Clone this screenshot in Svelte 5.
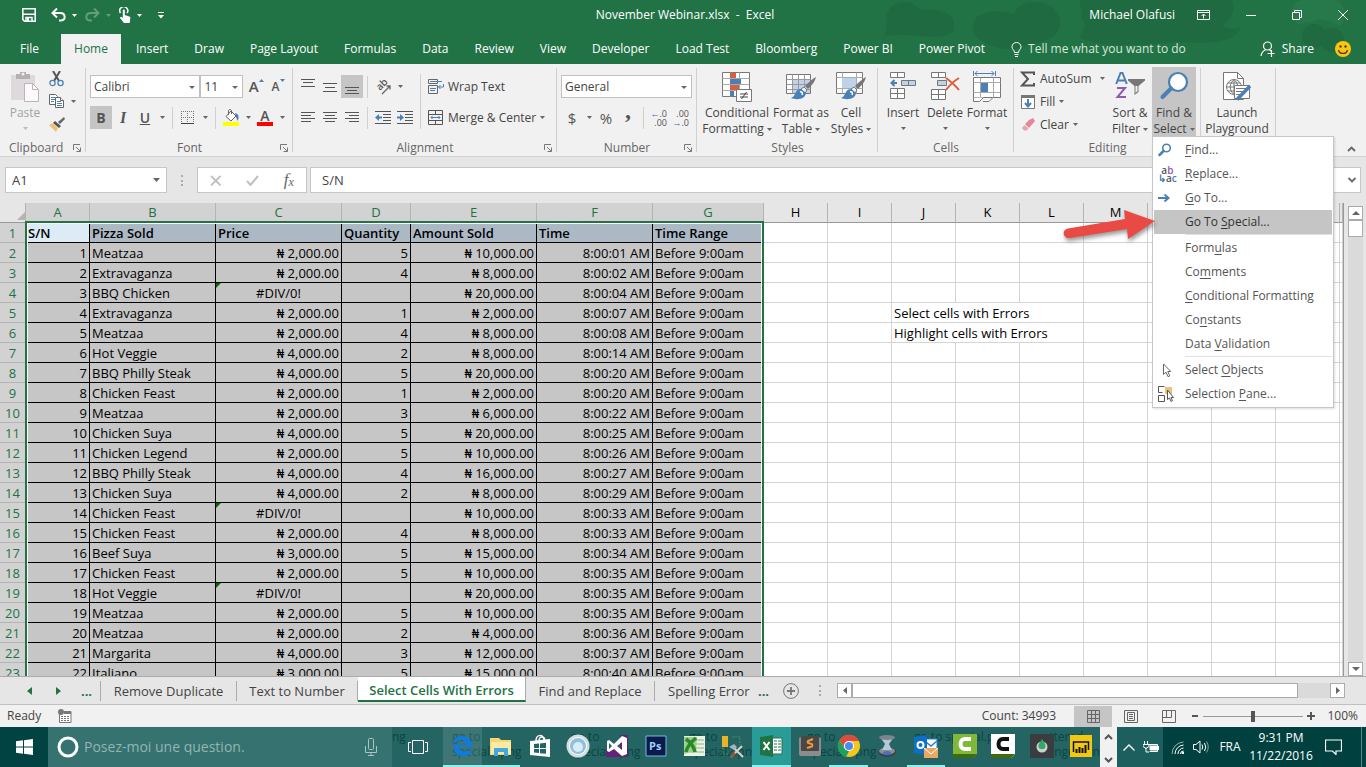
<script lang="ts">
  type Row = [string, string, string, string, string];

  const menuTabs = [
    'Insert', 'Draw', 'Page Layout', 'Formulas', 'Data', 'Review', 'View',
    'Developer', 'Load Test', 'Bloomberg', 'Power BI', 'Power Pivot',
  ];

  // widths in px; the first seven hold the selected list
  const columns = [
    { name: 'A', width: 64 }, { name: 'B', width: 126 }, { name: 'C', width: 126 },
    { name: 'D', width: 69 }, { name: 'E', width: 126 }, { name: 'F', width: 116 },
    { name: 'G', width: 111 },
    ...'HIJKLMNOP'.split('').map((name) => ({ name, width: 64 })),
  ];
  const selectedCount = 7;
  const selectionWidth = columns.slice(0, selectedCount).reduce((sum, c) => sum + c.width, 0);

  const headings = ['S/N', 'Pizza Sold', 'Price', 'Quantity', 'Amount Sold', 'Time', 'Time Range'];

  const ERR = '#DIV/0!';
  // pizza, price, quantity, amount, time
  const rows: Row[] = [
    ['Meatzaa', '2,000.00', '5', '10,000.00', '8:00:01 AM'],
    ['Extravaganza', '2,000.00', '4', '8,000.00', '8:00:02 AM'],
    ['BBQ Chicken', ERR, '', '20,000.00', '8:00:04 AM'],
    ['Extravaganza', '2,000.00', '1', '2,000.00', '8:00:07 AM'],
    ['Meatzaa', '2,000.00', '4', '8,000.00', '8:00:08 AM'],
    ['Hot Veggie', '4,000.00', '2', '8,000.00', '8:00:14 AM'],
    ['BBQ Philly Steak', '4,000.00', '5', '20,000.00', '8:00:20 AM'],
    ['Chicken Feast', '2,000.00', '1', '2,000.00', '8:00:20 AM'],
    ['Meatzaa', '2,000.00', '3', '6,000.00', '8:00:22 AM'],
    ['Chicken Suya', '4,000.00', '5', '20,000.00', '8:00:25 AM'],
    ['Chicken Legend', '2,000.00', '5', '10,000.00', '8:00:26 AM'],
    ['BBQ Philly Steak', '4,000.00', '4', '16,000.00', '8:00:27 AM'],
    ['Chicken Suya', '4,000.00', '2', '8,000.00', '8:00:29 AM'],
    ['Chicken Feast', ERR, '', '10,000.00', '8:00:33 AM'],
    ['Chicken Feast', '2,000.00', '4', '8,000.00', '8:00:33 AM'],
    ['Beef Suya', '3,000.00', '5', '15,000.00', '8:00:34 AM'],
    ['Chicken Feast', '2,000.00', '5', '10,000.00', '8:00:35 AM'],
    ['Hot Veggie', ERR, '', '20,000.00', '8:00:35 AM'],
    ['Meatzaa', '2,000.00', '5', '10,000.00', '8:00:35 AM'],
    ['Meatzaa', '2,000.00', '2', '4,000.00', '8:00:36 AM'],
    ['Margarita', '4,000.00', '3', '12,000.00', '8:00:37 AM'],
    ['Italiano', '3,000.00', '5', '15,000.00', '8:00:40 AM'],
  ];

  // notes typed in column J, by sheet row
  const notes: Record<number, string> = {
    5: 'Select cells with Errors',
    6: 'Highlight cells with Errors',
  };

  // [before, access key, after]
  const findMenu = [
    { icon: 'find', label: ['', 'F', 'ind...'] },
    { icon: 'replace', label: ['', 'R', 'eplace...'] },
    { icon: 'goto', label: ['', 'G', 'o To...'] },
    { icon: '', label: ['Go To ', 'S', 'pecial...'], active: true, ruled: true },
    { icon: '', label: ['Form', 'u', 'las'] },
    { icon: '', label: ['Co', 'm', 'ments'] },
    { icon: '', label: ['', 'C', 'onditional Formatting'] },
    { icon: '', label: ['Co', 'n', 'stants'] },
    { icon: '', label: ['Data ', 'V', 'alidation'], ruled: true },
    { icon: 'pointer', label: ['Select ', 'O', 'bjects'] },
    { icon: 'pane', label: ['Selection ', 'P', 'ane...'] },
  ];

  const apps = [
    'edge', 'explorer', 'store', 'disc', 'vs', 'ps', 'xl07', 'tools', 'excel',
    'sublime', 'chrome', 'lens', 'outlook', 'cam', 'camrec', 'drop', 'powerbi',
  ];
  const running = ['edge', 'explorer', 'excel', 'chrome', 'outlook'];

  // desktop file names that show through the taskbar
  const ghosts = [
    { x: 392, a: 'ng', b: '' },
    { x: 452, a: 'go to', b: 'special4.png' },
    { x: 571, a: 'go to', b: 'special3.png' },
    { x: 689, a: 'go to', b: 'special2.png' },
    { x: 807, a: 'go to', b: 'special1.png' },
    { x: 914, a: 'go to special.png', b: '' },
    { x: 1031, a: 'scattered', b: 'arrangement.png' },
  ];

  let zoom = $state(50);
</script>

{#snippet caret()}
  <svg class="caret" width="5" height="3" viewBox="0 0 5 3"><path d="M0 0h5L2.5 3z" /></svg>
{/snippet}

{#snippet launcher()}
  <button class="launcher" aria-label="More options">
    <svg width="8" height="8" viewBox="0 0 8 8" fill="none" stroke="#777">
      <path d="M.5 6V.5H7M3 3l4 4M7.5 3.5v4h-4" />
    </svg>
  </button>
{/snippet}

{#snippet lines(rowsOf: number[][])}
  <svg width="16" height="16" viewBox="0 0 16 16" stroke="#555">
    {#each rowsOf as [x1, x2, y]}
      <path d="M{x1} {y}.5H{x2}" />
    {/each}
  </svg>
{/snippet}

{#snippet brush()}
  <path d="M30 7c-4 2-8 6-11 9l3 3c3-3 7-7 8-12z" fill="#777" />
  <path d="M18 17l3 3-2 3-4-4z" fill="#f1f1f1" stroke="#777" />
  <path d="M15 19c-4 0-5 3-6 5-1 2-2 3-4 4 5 2 14 2 15-5z" fill="#4a80b5" />
  <path d="M14 22c2-1 3 1 2 3" fill="none" stroke="#fff" stroke-width="1.5" />
{/snippet}

<div class="window">
  <header class="title">
    <svg class="doodle" width="520" height="64" viewBox="0 0 520 64" aria-hidden="true">
      <g fill="#1f6a40">
        <path d="M40 16C44 0 66-2 74 10c14-2 34 2 34 12 0 6 2 10-6 12-12 8-44-4-64 3 2-8 4-10 2-21z" />
        <path d="M130 18c10-8 24-8 38-4 4-16 42-18 46 6 2 22-24 22-42 28-14 4-26-2-34-6-12-6-14-16-8-24z" />
        <path d="M234 0h152c4 12 0 18-10 26 8 4 14 2 18 2-4 14-28 16-60 14-40 2-70 8-100-4 2-10 10-12 2-18z" />
        <circle cx="468" cy="36" r="12" /><circle cx="486" cy="40" r="12" />
      </g>
      <path d="M452 24c-12-12-4-24 4-24h34c10 4 12 20 4 26-6-4-20-10-28-4z" fill="#27794b" />
    </svg>
    <div class="caption">
      <div class="quick">
        <button class="save" aria-label="Save">
          <svg width="14" height="14" viewBox="0 0 14 14"><path d="M.8.8h12.4v12.4H2.5L.8 11.5z" fill="none" stroke="#fff" stroke-width="1.6" /><path d="M1 6.2h12M4 13V9.5h6V13" fill="none" stroke="#fff" stroke-width="1.5" /><path d="M5 10h2v3H5z" fill="#fff" /></svg>
        </button>
        <button aria-label="Undo">
          <svg width="15" height="14" viewBox="0 0 15 14"><path d="M2 5h7c6 0 6 7 1 7.5H8" fill="none" stroke="#fff" stroke-width="2" /><path d="M6 .5L1.5 5 6 9.5" fill="none" stroke="#fff" stroke-width="2" /></svg>
          <span class="white">{@render caret()}</span>
        </button>
        <button class="off" aria-label="Redo">
          <svg width="15" height="14" viewBox="0 0 15 14"><path d="M13 5H6c-6 0-6 7-1 7.5h2" fill="none" stroke="#fff" stroke-width="2" /><path d="M9 .5L13.5 5 9 9.5" fill="none" stroke="#fff" stroke-width="2" /></svg>
          <span class="white">{@render caret()}</span>
        </button>
        <button aria-label="Touch mode">
          <svg width="12" height="16" viewBox="0 0 12 16"><path d="M1.5 6a4 4 0 1 1 6.5 0" fill="none" stroke="#fff" stroke-width="1.5" /><path d="M3.8 3.5c0-1.5 2-1.5 2 0V8l4.5 1.5c1 .5 1.2 1 1 2l-.6 4.5H5L1 11c0-1 1.5-1.5 2.8-.3z" fill="#fff" /></svg>
          <span class="white">{@render caret()}</span>
        </button>
        <button class="custom" aria-label="Customize">
          <svg width="6" height="7" viewBox="0 0 6 7"><path d="M0 .5h6" stroke="#fff" /><path d="M0 3h6L3 6.5z" fill="#fff" /></svg>
        </button>
      </div>
      <div class="doc">November Webinar.xlsx&nbsp; -&nbsp; Excel</div>
      <div class="winctl">
        <span class="user">Michael Olafusi</span>
        <button aria-label="Ribbon display">
          <svg width="13" height="10" viewBox="0 0 13 10" fill="none" stroke="#fff"><path d="M.5.5h12v9H.5zM.5 2.5h12M6.5 8.5v-4M4.5 6l2-2 2 2" /></svg>
        </button>
        <button aria-label="Minimize"><svg width="10" height="10" viewBox="0 0 10 10" stroke="#fff"><path d="M0 5.5h10" /></svg></button>
        <button aria-label="Restore"><svg width="10" height="10" viewBox="0 0 10 10" fill="none" stroke="#fff"><path d="M.5 2.5h7v7h-7zM2.5 2.5v-2h7v7h-2" /></svg></button>
        <button aria-label="Close"><svg width="10" height="10" viewBox="0 0 10 10" stroke="#fff"><path d="M0 0l10 10M10 0L0 10" /></svg></button>
      </div>
    </div>
    <nav class="tabs">
      <button class="file">File</button>
      <button class="current">Home</button>
      {#each menuTabs as tab}
        <button>{tab}</button>
      {/each}
      <button class="tell">
        <svg width="11" height="15" viewBox="0 0 11 15" fill="none" stroke="#fff"><path d="M3.5 10.5C3.5 8 1 7.5 1 4.8a4.5 4.3 0 0 1 9 0c0 2.7-2.5 3.2-2.5 5.7zM3.5 12.5h4M4 14.5h3" /></svg>
        Tell me what you want to do
      </button>
      <span class="tail">
        <button class="share">
          <svg width="16" height="16" viewBox="0 0 16 16" fill="none" stroke="#fff" stroke-width="1.2"><circle cx="7.5" cy="5" r="4" /><path d="M1 15c.5-3.500 2-5 4.500-6.200M9.500 8.800l1.500 1.200M7.500 12.500h7M11.500 9v7" /></svg>
          Share
        </button>
        <button class="smile" aria-label="Feedback">
          <svg width="16" height="16" viewBox="0 0 16 16"><circle cx="8" cy="8" r="8" fill="#fcc40e" /><circle cx="5.5" cy="5.5" r="1.2" fill="#444" /><circle cx="10.5" cy="5.5" r="1.2" fill="#444" /><path d="M3.5 9c1 4.5 8 4.5 9 0" fill="none" stroke="#444" stroke-width="1.3" /></svg>
        </button>
      </span>
    </nav>
  </header>

  <section class="ribbon">
    <div class="group clipboard">
      <div class="body">
        <button class="big paste">
          <svg width="30" height="32" viewBox="0 0 30 32"><path d="M1 5h24v25H1z" fill="#ddd9dd" /><path d="M6 4h4V2h6v2h4v5H6z" fill="#b3b0b3" /><circle cx="13" cy="4" r="1.5" fill="#f1f1f1" /><path d="M14.5 13.5h8l6 6v12h-14z" fill="#fbf9fb" stroke="#bbb5bb" /><path d="M22.5 13.5v6h6" fill="none" stroke="#bbb5bb" /></svg>
          <span>Paste</span>{@render caret()}
        </button>
        <div class="stack clips">
          <button aria-label="Cut"><svg width="15" height="16" viewBox="0 0 15 16" fill="none"><path d="M4 0l6 10M11 0L5 10" stroke="#555" stroke-width="2" /><circle cx="3.5" cy="12" r="2.6" stroke="#4a80b5" stroke-width="1.3" /><circle cx="11.5" cy="12" r="2.6" stroke="#4a80b5" stroke-width="1.3" /></svg></button>
          <button aria-label="Copy"><svg width="16" height="15" viewBox="0 0 16 15" fill="#fff" stroke="#666"><path d="M.5.5h6l2 2v8h-8z" /><path d="M2 3.5h4M2 5.5h4M2 7.5h3" stroke="#4a80b5" /><path d="M6.5 3.5h5l3 3v7h-8z" /><path d="M11.5 3.5v3h3" /><path d="M8 7.5h4M8 9.5h5M8 11.5h5" stroke="#4a80b5" /></svg>{@render caret()}</button>
          <button aria-label="Format Painter"><svg width="16" height="15" viewBox="0 0 16 15"><path d="M15 0l1 2-5 5-2-2z" fill="#666" /><path d="M6 4l6 5-2 2-6-5z" fill="#555" /><path d="M4 6l5 5-2 4L0 8z" fill="#ecc27e" /></svg></button>
        </div>
      </div>
      <footer><span>Clipboard</span>{@render launcher()}</footer>
    </div>

    <div class="group font">
      <div class="body rows">
        <div class="line">
          <label class="pick name"><select aria-label="Font"><option>Calibri</option></select></label>
          <label class="pick size"><select aria-label="Font size"><option>11</option></select></label>
          <button class="ib grow" aria-label="Increase font size"><b>A</b><svg width="5" height="3" viewBox="0 0 5 3"><path d="M0 3h5L2.5 0z" fill="#4a80b5" /></svg></button>
          <button class="ib grow small" aria-label="Decrease font size"><b>A</b><svg width="5" height="3" viewBox="0 0 5 3"><path d="M0 0h5L2.5 3z" fill="#4a80b5" /></svg></button>
        </div>
        <div class="line">
          <button class="ib on"><b>B</b></button>
          <button class="ib"><i>I</i></button>
          <button class="ib"><u>U</u></button>
          <button class="ca" aria-label="Underline styles">{@render caret()}</button>
          <hr />
          <button class="ib" aria-label="Borders"><svg width="14" height="14" viewBox="0 0 14 14" fill="none" stroke="#777"><path d="M.5 0v12M6.5 0v12M12.5 0v12M0 .5h13M0 6.5h13" stroke-dasharray="1 1" /><path d="M0 12.5h13" stroke="#444" /></svg></button>
          <button class="ca" aria-label="Border styles">{@render caret()}</button>
          <hr />
          <button class="ib" aria-label="Fill color"><svg width="17" height="17" viewBox="0 0 17 17"><path d="M3 7.5L8 2l5 5-5 5z" fill="#fff" stroke="#666" /><path d="M5.5 6V2c0-2 3-2 3 0v3" fill="none" stroke="#666" /><path d="M12 4c4 1 4.5 4 2.5 8-1-3-1.5-4-2-6z" fill="#4a80b5" /><path d="M0 13h16v4H0z" fill="#ff0" /></svg></button>
          <button class="ca" aria-label="Fill colors">{@render caret()}</button>
          <button class="ib color" aria-label="Font color"><b>A</b></button>
          <button class="ca" aria-label="Font colors">{@render caret()}</button>
        </div>
      </div>
      <footer><span>Font</span>{@render launcher()}</footer>
    </div>

    <div class="group align">
      <div class="body">
        <div class="rows">
          <div class="line">
            <button class="ib" aria-label="Top align">{@render lines([[1, 15, 0], [3, 13, 3], [1, 15, 7]])}</button>
            <button class="ib" aria-label="Middle align">{@render lines([[1, 15, 4], [3, 13, 8], [1, 15, 12]])}</button>
            <button class="ib on" aria-label="Bottom align">{@render lines([[1, 15, 8], [3, 13, 11], [1, 15, 14]])}</button>
            <hr />
            <button class="ib" aria-label="Orientation"><svg width="18" height="18" viewBox="0 0 18 18"><text x="0" y="0" transform="translate(6 13) rotate(-45)" font-family="Open Sans" font-weight="600" font-size="10" fill="#555">ab</text><path d="M8 16l8-8M12.5 8H16v3.5" fill="none" stroke="#666" stroke-width="1.3" /></svg></button>
            <button class="ca" aria-label="Orientations">{@render caret()}</button>
          </div>
          <div class="line">
            <button class="ib" aria-label="Align left">{@render lines([[1, 15, 2], [1, 11, 5], [1, 15, 8], [1, 11, 11]])}</button>
            <button class="ib" aria-label="Center">{@render lines([[1, 15, 2], [3, 13, 5], [1, 15, 8], [3, 13, 11]])}</button>
            <button class="ib" aria-label="Align right">{@render lines([[1, 15, 2], [5, 15, 5], [1, 15, 8], [5, 15, 11]])}</button>
            <hr />
            <button class="ib" aria-label="Decrease indent"><svg width="16" height="13" viewBox="0 0 16 13" stroke="#555"><path d="M0 .5h16M8 3.5h8M8 6.5h8M8 9.5h8M0 12.5h16" /><path d="M0 6.5L4 3v2.5h3v2H4V10z" fill="#4a80b5" stroke="none" /></svg></button>
            <button class="ib" aria-label="Increase indent"><svg width="16" height="13" viewBox="0 0 16 13" stroke="#555"><path d="M0 .5h16M8 3.5h8M8 6.5h8M8 9.5h8M0 12.5h16" /><path d="M7 6.5L3 3v2.5H0v2h3V10z" fill="#4a80b5" stroke="none" /></svg></button>
          </div>
        </div>
        <hr class="tall" />
        <div class="rows">
          <button class="text">
            <svg width="16" height="15" viewBox="0 0 16 15" fill="none" stroke="#666"><path d="M.5.5h9v4h-9zM.5 6.5h9v8h-9z" /><path d="M2 2.5h12M2 9.5h6M2 11.5h5M15.5 5v3h-5M12.5 6l-2 2 2 2" stroke="#4a80b5" /></svg>
            Wrap Text
          </button>
          <button class="text">
            <svg width="16" height="16" viewBox="0 0 16 16" fill="none" stroke="#555"><path d="M.5.5h14v14H.5zM.5 4.5h14M.5 10.5h14M7.5.5v4M7.5 10.5v4" /><path d="M3 7.5h9M4.5 6L3 7.5 4.5 9M10.5 6L12 7.5 10.5 9" stroke="#4a80b5" /></svg>
            Merge &amp; Center {@render caret()}
          </button>
        </div>
      </div>
      <footer><span>Alignment</span>{@render launcher()}</footer>
    </div>

    <div class="group number">
      <div class="body rows">
        <div class="line"><label class="pick format"><select aria-label="Number format"><option>General</option></select></label></div>
        <div class="line">
          <button class="ib sym">$</button>
          <button class="ca" aria-label="Currencies">{@render caret()}</button>
          <button class="ib sym">%</button>
          <button class="ib sym comma"><b>,</b></button>
          <hr />
          <button class="ib dec"><span><em>←</em>.0</span><span>.00</span></button>
          <button class="ib dec"><span>.00</span><span><em>→</em>.0</span></button>
        </div>
      </div>
      <footer><span>Number</span>{@render launcher()}</footer>
    </div>

    <div class="group styles">
      <div class="body">
        <button class="big wide">
          <svg width="30" height="32" viewBox="0 0 30 32" fill="#fff" stroke="#777"><path d="M.5 2.5h27v24H.5z" /><path d="M8.5 2.5v24M17.5 2.5v24M.5 8.5h27M.5 14.5h27M.5 20.5h27" stroke="#aaa" /><path d="M8 3h6v5H8zM8 15h9v5H8z" fill="#d8603f" stroke="none" /><path d="M8 9h11v5H8zM8 21h4v5H8z" fill="#4a80b5" stroke="none" /><path d="M14.5 19.5h15v12h-15z" /><path d="M18 24h8M18 27h8M24.5 22l-5 7" stroke="#444" /></svg>
          <span>Conditional</span><span>Formatting {@render caret()}</span>
        </button>
        <button class="big mid">
          <svg width="30" height="32" viewBox="0 0 30 32"><path d="M.5 4.5h24v19H.5z" fill="#fff" stroke="#777" /><path d="M7 9h17v14H7z" fill="#c0d2e8" /><path d="M6.5 4.5v19M12.5 4.5v19M18.5 4.5v19M.5 9.5h24M.5 14.5h24M.5 19.5h24" stroke="#999" />{@render brush()}</svg>
          <span>Format as</span><span>Table {@render caret()}</span>
        </button>
        <button class="big">
          <svg width="30" height="32" viewBox="0 0 30 32"><path d="M.5 2.5h26v21H.5z" fill="#fff" stroke="#777" /><path d="M6.5 2.5v21M20.5 2.5v21M.5 7.5h26M.5 18.5h26" stroke="#aaa" /><path d="M6 8h14v10H6z" fill="#c0d2e8" />{@render brush()}</svg>
          <span>Cell</span><span>Styles {@render caret()}</span>
        </button>
      </div>
      <footer><span>Styles</span></footer>
    </div>

    <div class="group cells">
      <div class="body">
        <button class="big">
          <svg width="28" height="32" viewBox="0 0 28 32" fill="#fff" stroke="#777"><path d="M1.5 2.5h14v5h-14zM8.5 2.5v5M1.5 18.5h14v10h-14zM8.5 18.5v10M1.5 23.5h14" /><path d="M12.5 10.5h14v5h-14zM19.5 10.5v5" fill="#c0d2e8" /><path d="M8 13H3M5.5 10L2.5 13l3 3" fill="none" stroke="#4a80b5" stroke-width="2" /></svg>
          <span>Insert</span>{@render caret()}
        </button>
        <button class="big">
          <svg width="30" height="32" viewBox="0 0 30 32" fill="#fff" stroke="#777"><path d="M1.5 2.5h14v5h-14zM8.5 2.5v5M1.5 19.5h14v10h-14zM8.5 19.5v10M1.5 24.5h14" /><path d="M7.5 10.5h9v5h-9z" fill="#c0d2e8" /><path d="M16 8c4 3 9 7 13 12M29 8c-5 3-10 8-13 12" fill="none" stroke="#d8603f" stroke-width="2" /></svg>
          <span>Delete</span>{@render caret()}
        </button>
        <button class="big">
          <svg width="30" height="32" viewBox="0 0 30 32" fill="#fff" stroke="#777"><path d="M1.5 1v5M23.5 1v5M3 3.5h19M5.5 1L3 3.5 5.5 6M19.5 1L22 3.5 19.5 6" fill="none" stroke="#4a80b5" /><path d="M1.5 7.5h27v20h-27z" /><path d="M8.5 7.5v20M21.5 7.5v20M1.5 12.5h27M1.5 22.5h27" stroke="#aaa" /><path d="M9 13h7v9H9z" fill="#4a80b5" stroke="none" /><path d="M1.5 27.5v4h6l4-4M11 31.5h6l4-4" /></svg>
          <span>Format</span>{@render caret()}
        </button>
      </div>
      <footer><span>Cells</span></footer>
    </div>

    <div class="group editing">
      <div class="body">
        <div class="stack edits">
          <button class="text"><svg width="16" height="16" viewBox="0 0 16 16"><path d="M14 4V1.5H2L8 8l-6 6.5h12V12" fill="none" stroke="#555" stroke-width="2" /></svg>AutoSum <i class="push">{@render caret()}</i></button>
          <button class="text"><svg width="16" height="16" viewBox="0 0 16 16"><path d="M1.5 1.5h13v13h-13z" fill="#fff" stroke="#777" /><path d="M1 1h14v3H1z" fill="#777" /><path d="M8 5v7M5 9l3 3.5L11 9" fill="none" stroke="#4a80b5" stroke-width="2" /></svg>Fill {@render caret()}</button>
          <button class="text"><svg width="16" height="16" viewBox="0 0 16 16"><path d="M9 3l4-2 2 3-6 7-4-4z" fill="#e5879a" /><path d="M4.5 8l4 3.5-2 2H4L2 11z" fill="#eba3b1" /></svg>Clear {@render caret()}</button>
        </div>
        <button class="big">
          <svg width="30" height="32" viewBox="0 0 30 32"><path d="M1.2 14L5.5 3h2l4.300 11M3 10.5h7" fill="none" stroke="#4a80b5" stroke-width="2" /><path d="M2 18h8L2.5 27H11" fill="none" stroke="#8e5bb0" stroke-width="2" /><path d="M13 9h17v1.5L23.5 16v6L19.5 25v-9L13 10.5z" fill="#777" /><path d="M20.5 16h2v5l-2 2z" fill="#f1f1f1" /></svg>
          <span>Sort &amp;</span><span>Filter {@render caret()}</span>
        </button>
        <div class="finder">
          <button class="big pressed">
            <svg width="30" height="32" viewBox="0 0 30 32"><circle cx="19" cy="12" r="9" fill="#fff" stroke="#4a80b5" stroke-width="2.2" /><path d="M12 18.5L3.5 27" stroke="#4a80b5" stroke-width="4" stroke-linecap="round" /></svg>
            <span>Find &amp;</span><span>Select {@render caret()}</span>
          </button>
          <ul class="menu">
            {#each findMenu as item}
              <li class:ruled={item.ruled}>
                <button class:active={item.active}>
                  <span class="mi">
                    {#if item.icon === 'find'}
                      <svg width="14" height="14" viewBox="0 0 14 14"><circle cx="8.5" cy="5" r="3.8" fill="none" stroke="#4a80b5" stroke-width="1.6" /><path d="M5.5 8L1.5 12" stroke="#4a80b5" stroke-width="2.5" stroke-linecap="round" /></svg>
                    {:else if item.icon === 'replace'}
                      <span class="abac"><b>a<em>b</em></b><b><i>↳</i>a<i>c</i></b></span>
                    {:else if item.icon === 'goto'}
                      <svg width="12" height="8" viewBox="0 0 12 8"><path d="M0 4h10M6.5.5L10.5 4 6.5 7.5" fill="none" stroke="#4a80b5" stroke-width="2" /></svg>
                    {:else if item.icon === 'pointer'}
                      <svg width="14" height="15" viewBox="-4 0 14 15"><path d="M1.5 1v10.5L4 9.2l2 4.5 1.8-.8-2-4.4h3z" fill="#fff" stroke="#666" /></svg>
                    {:else if item.icon === 'pane'}
                      <svg width="17" height="17" viewBox="0 0 17 17"><path d="M7 1h7v7H7z" fill="#ecc27e" /><path d="M6.5.5h-6v6h4M.5 9.5h6v6h-6z" fill="none" stroke="#555" /><path d="M9.5 4v9.5L11.5 12l1.5 3.5 1.5-.8-1.5-3.2h2.5z" fill="#fff" stroke="#555" /></svg>
                    {/if}
                  </span>
                  <span>{item.label[0]}<u>{item.label[1]}</u>{item.label[2]}</span>
                </button>
              </li>
            {/each}
          </ul>
          <svg class="pointer" width="102" height="44" viewBox="0 0 102 44" aria-hidden="true">
            <path d="M14 22.5L71 13l-1-9 31 11-27 18-1-10-57 9c-7 1-9-8-2-9.5z" fill="#e94b44" />
          </svg>
        </div>
      </div>
      <footer><span>Editing</span></footer>
    </div>

    <div class="group play">
      <div class="body">
        <button class="big">
          <svg width="30" height="32" viewBox="0 0 30 32" fill="none" stroke="#777"><path d="M1.5 2.5h14l6 6v21h-20z" fill="#fff" /><path d="M15.5 2.5v6h6" /><circle cx="12" cy="17" r="7.5" /><path d="M4.5 17h15M6 13h12M6 21h12M12 9.5v15M12 9.5c-5 4-5 11 0 15M12 9.5c5 4 5 11 0 15" /><path d="M12.5 15.5h15v13h-15z" fill="#fff" /><path d="M14 18.5h10M14 21.5h8M14 24.5h6" /><path d="M28 16L15 29.5" stroke="#4a80b5" stroke-width="3.5" /></svg>
          <span>Launch</span><span>Playground</span>
        </button>
      </div>
      <footer></footer>
    </div>
    <button class="collapse" aria-label="Collapse ribbon"><svg width="9" height="6" viewBox="0 0 9 6"><path d="M1 5l3.5-3.5L8 5" fill="none" stroke="#666" stroke-width="1.8" /></svg></button>
  </section>

  <section class="formula">
    <div class="box namebox"><input value="A1" aria-label="Name box" /><svg class="caret" width="7" height="4" viewBox="0 0 7 4"><path d="M0 0h7L3.5 4z" /></svg></div>
    <span class="grip"></span>
    <div class="box fx">
      <button aria-label="Cancel"><svg width="12" height="11" viewBox="0 0 12 11"><path d="M1 1l9.5 9.5M10.5 1L1 10.5" stroke="#c0c0c0" stroke-width="1.8" /></svg></button>
      <button aria-label="Enter"><svg width="13" height="11" viewBox="0 0 13 11"><path d="M1 6l3.5 4L12 1" fill="none" stroke="#c0c0c0" stroke-width="2" /></svg></button>
      <button class="fn"><i>f</i><small>x</small></button>
    </div>
    <div class="box content"><input value="S/N" aria-label="Formula" /><svg width="8" height="6" viewBox="0 0 8 6"><path d="M.5 1L4 4.5 7.5 1" fill="none" stroke="#666" stroke-width="1.8" /></svg></div>
  </section>

  <main class="sheet">
    <div class="grid">
      <table>
        <colgroup>
          <col style:width="26px" />
          {#each columns as col}
            <col style:width="{col.width}px" />
          {/each}
          <col />
        </colgroup>
        <thead>
          <tr>
            <th class="corner"><svg width="8" height="8" viewBox="0 0 8 8"><path d="M8 0v8H0z" fill="#b4b4b4" /></svg></th>
            {#each columns as col, i}
              <th class:sel={i < selectedCount}>{col.name}</th>
            {/each}
            <th></th>
          </tr>
        </thead>
        <tbody>
          <tr class="names">
            <th>1</th>
            {#each headings as heading}
              <td class="in">{heading}</td>
            {/each}
            {#each { length: 10 }}
              <td></td>
            {/each}
          </tr>
          {#each rows as [pizza, price, quantity, amount, time], i}
            <tr>
              <th>{i + 2}</th>
              <td class="in num">{i + 1}</td>
              <td class="in">{pizza}</td>
              <td class="in" class:num={price !== ERR} class:err={price === ERR}>{price === ERR ? price : `₦ ${price}`}</td>
              <td class="in num">{quantity}</td>
              <td class="in num">₦ {amount}</td>
              <td class="in num">{time}</td>
              <td class="in">Before 9:00am</td>
              {#if notes[i + 2]}
                <td></td><td></td>
                <td colspan="3">{notes[i + 2]}</td>
                {#each { length: 5 }}
                  <td></td>
                {/each}
              {:else}
                {#each { length: 10 }}
                  <td></td>
                {/each}
              {/if}
            </tr>
          {/each}
        </tbody>
      </table>
      <div class="selection" style:width="{selectionWidth + 1}px"></div>
    </div>
    <div class="vscroll">
      <button aria-label="Scroll up"><svg width="8" height="4" viewBox="0 0 8 4"><path d="M0 4h8L4 0z" /></svg></button>
      <span class="thumb"></span>
      <button class="end" aria-label="Scroll down"><svg width="8" height="4" viewBox="0 0 8 4"><path d="M0 0h8L4 4z" /></svg></button>
    </div>
  </main>

  <section class="sheets">
    <button class="nav" aria-label="Previous sheet"><svg width="5" height="8" viewBox="0 0 5 8"><path d="M5 0v8L0 4z" /></svg></button>
    <button class="nav" aria-label="Next sheet"><svg width="5" height="8" viewBox="0 0 5 8"><path d="M0 0v8l5-4z" /></svg></button>
    <button class="dots">...</button>
    <button class="tab t1">Remove Duplicate</button>
    <button class="tab t2">Text to Number</button>
    <button class="tab t3">Select Cells With Errors</button>
    <button class="tab t4">Find and Replace</button>
    <button class="tab t5"><span>Spelling Errors</span></button>
    <button class="dots">...</button>
    <button class="add" aria-label="New sheet"><svg width="16" height="16" viewBox="0 0 16 16" fill="none" stroke="#777"><circle cx="8" cy="8" r="7.4" /><path d="M8 4v8M4 8h8" stroke-width="1.8" /></svg></button>
    <span class="grip"></span>
    <div class="hscroll">
      <button aria-label="Scroll left"><svg width="4" height="7" viewBox="0 0 4 7"><path d="M4 0v7L0 3.5z" /></svg></button>
      <span class="thumb"></span>
      <span class="track"></span>
      <button aria-label="Scroll right"><svg width="4" height="7" viewBox="0 0 4 7"><path d="M0 0v7l4-3.5z" /></svg></button>
    </div>
  </section>

  <section class="status">
    <span>Ready</span>
    <svg class="macro" width="14" height="14" viewBox="0 0 14 14"><path d="M1.5 4v9.5h11.5V2.5H6" fill="#fff" stroke="#777" /><path d="M6 2h7v3H6z" fill="#777" /><path d="M3 7.5h9M3 9.5h9M3 11.5h9" stroke="#777" stroke-dasharray="2 1" /><circle cx="3" cy="3" r="3" fill="#777" /></svg>
    <span class="count">Count: 34993</span>
    <button class="view on" aria-label="Normal"><svg width="13" height="13" viewBox="0 0 13 13" fill="none" stroke="#666"><path d="M.5.5h12v12H.5zM4.5.5v12M8.5.5v12M.5 4.5h12M.5 8.5h12" /></svg></button>
    <button class="view" aria-label="Page layout"><svg width="14" height="13" viewBox="0 0 14 13" fill="none" stroke="#666"><path d="M.5.5h13v12H.5zM3.5 2.5h7v8h-7zM5 4.5h4M5 6.5h4M5 8.5h4" /></svg></button>
    <button class="view" aria-label="Page break"><svg width="14" height="13" viewBox="0 0 14 13" fill="none" stroke="#666"><path d="M.5.5h13v12H.5zM4.5.5v7M9.5.5v7M.5 7.5h9" /></svg></button>
    <button class="step" aria-label="Zoom out"><svg width="8" height="8" viewBox="0 0 8 8"><path d="M1 4h6" stroke="#555" stroke-width="2" /></svg></button>
    <input class="zoom" type="range" min="0" max="100" bind:value={zoom} aria-label="Zoom" />
    <button class="step" aria-label="Zoom in"><svg width="8" height="8" viewBox="0 0 8 8"><path d="M0 4h8M4 0v8" stroke="#555" stroke-width="2" /></svg></button>
    <span class="pct">100%</span>
  </section>

  <footer class="taskbar">
    {#each ghosts as ghost}
      <span class="ghost" style:left="{ghost.x}px">{ghost.a}<br />{ghost.b}</span>
    {/each}
    <button class="start" aria-label="Start"><svg width="17" height="16" viewBox="0 0 17 16" fill="#fff"><path d="M0 2.3l7-1v6.300H0zM8 1.2L17 0v7.600H8zM0 8.5h7v6.300l-7-1zM8 8.5h9V16l-9-1.200z" /></svg></button>
    <label class="search">
      <svg width="22" height="22" viewBox="0 0 22 22"><circle cx="11" cy="11" r="9" fill="none" stroke="#fff" stroke-width="3" /></svg>
      <input placeholder="Posez-moi une question." aria-label="Search" />
      <svg width="12" height="18" viewBox="0 0 12 18" fill="none" stroke="#a9c4c3"><rect x="3.5" y=".5" width="5" height="11" rx="1" /><path d="M.5 8v6.5h11V8M6 14.5v3M3 17.5h6" /></svg>
    </label>
    <button class="taskview" aria-label="Task view"><svg width="20" height="14" viewBox="0 0 20 14" fill="none" stroke="#fff"><path d="M4.5.5h11v13h-11zM3 2.5H.5v9H3M17 2.5h2.5v9H17" /></svg></button>
    <div class="apps">
      {#each apps as app}
        <button class="app {app}" class:running={running.includes(app)} aria-label={app}>
          <svg width="24" height="24" viewBox="0 0 24 24">
            {#if app === 'edge'}
              <path d="M2 11C3 4 8 2 12 2c7 0 10 5 10 11H9c0 4 4 6 12 3v4C12 24 5 22 4 15c0-4 3-6 6-7-2 1-2 2-2 3h8c0-6-9-7-14 0z" fill="#0f7bdc" />
            {:else if app === 'explorer'}
              <path d="M1 4h9l2 2h10v15H1z" fill="#f7d774" /><path d="M2 8h20v12H2z" fill="#fde9a0" /><path d="M5 14h14v8h-4v-4H9v4H5z" fill="#3fa9e0" />
            {:else if app === 'store'}
              <path d="M2 7l20-2v18L2 21z" fill="#fff" /><path d="M8 7c0-7 7-7 8-1M11 7c0-5 5-5 6-1" fill="none" stroke="#fff" stroke-width="1.5" /><path d="M6 10l5-.5V14H6zM12 9.4l6-.6V14h-6zM6 15h5v4l-5-.4zM12 15h6v4.8l-6-.6z" fill="#226564" />
            {:else if app === 'disc'}
              <circle cx="12" cy="12" r="11.5" fill="#d5dde0" /><circle cx="12" cy="12" r="9" fill="#fff" /><circle cx="12" cy="12" r="8" fill="#8fc0dc" /><circle cx="12" cy="13" r="5" fill="#d8eef6" />
            {:else if app === 'vs'}
              <path d="M1 15h22v8H1zM15 1h8v22h-8z" fill="#68217a" /><path d="M17 2l5 2v16l-5 2-8-7-5 3-2-1V7l2-1 5 4zM17 8l-5 4 5 4zM4 9v6l3-3z" fill="#fff" fill-rule="evenodd" />
            {:else if app === 'ps'}
              <path d="M2 2h20v20H2z" fill="#0a1a4a" stroke="#7fb5e0" /><text x="5" y="16" font-family="Open Sans" font-weight="700" font-size="11" fill="#9fd0ff">Ps</text>
            {:else if app === 'xl07'}
              <path d="M2 2h21v20H2z" fill="#e9f3e4" /><path d="M14 6h8M14 10h8M14 14h8M8 18h14" stroke="#8fb584" /><path d="M2 3h13l-1 14L2 20z" fill="#9ccf8c" /><path d="M4 5c4 3 8 8 9 13M14 4C9 8 5 13 4 18" fill="none" stroke="#2b8a28" stroke-width="3.5" />
            {:else if app === 'tools'}
              <path d="M1 2h6v11H1z" fill="#eab32a" /><path d="M11 3h8v8M2 14v6h6" fill="none" stroke="#3a9060" stroke-dasharray="2 1" /><path d="M11 12l11 11M21 12L10 23" stroke="#d9d2c8" stroke-width="2" /><path d="M8 13l5-3 3 3-3 3z" fill="#a7b3bd" /><path d="M10 23l4-4" stroke="#a3502c" stroke-width="2.5" />
            {:else if app === 'excel'}
              <path d="M13 4h10v16H13z" fill="#fff" stroke="#217346" /><path d="M15 7h3M19 7h3M15 10h3M19 10h3M15 13h3M19 13h3M15 16h3M19 16h3" stroke="#217346" /><path d="M1 3l13-2v22L1 21z" fill="#217346" /><path d="M4.5 8l6 8M10.5 8l-6 8" stroke="#fff" stroke-width="2" />
            {:else if app === 'sublime'}
              <rect x="1" y="3" width="22" height="19" rx="2" fill="#8c8c8c" /><rect x="3" y="2" width="18" height="15" rx="1" fill="#484848" /><path d="M15 5l-5 2c-1 2 0 2 2 2.5s3 1 2 3L9 14" fill="none" stroke="#f29b34" stroke-width="2" />
            {:else if app === 'chrome'}
              <circle cx="12" cy="12" r="11" fill="#f3c61b" /><path d="M2.5 6.5A11 11 0 0 1 22 7H12a5 5 0 0 0-5 6z" fill="#dd4b3e" /><path d="M2.5 6.5L8 15l4 2-3 6A11 11 0 0 1 2.5 6.5z" fill="#1fa15d" /><circle cx="12" cy="12" r="5" fill="#fff" /><circle cx="12" cy="12" r="4" fill="#4a8af4" />
            {:else if app === 'lens'}
              <ellipse cx="12" cy="18" rx="9" ry="5" fill="#3f4248" /><ellipse cx="12" cy="17" rx="8" ry="3.5" fill="#8a8e95" /><ellipse cx="12" cy="19" rx="4" ry="2" fill="#4a6fc0" /><path d="M5 3h14l-5 7 3 6H7l3-6z" fill="#b8c8d4" /><ellipse cx="12" cy="3.5" rx="8" ry="2.5" fill="#7c848c" />
            {:else if app === 'outlook'}
              <path d="M12 5h11v13H12z" fill="#fff" stroke="#2a7fd4" /><path d="M12 8l5 4 6-5" fill="none" stroke="#2a7fd4" stroke-width="1.5" /><path d="M0 3l13-2v20L0 19z" fill="#0d6fc8" /><circle cx="6.5" cy="11" r="3" fill="none" stroke="#fff" stroke-width="2" /><path d="M10 14h14v10H10z" fill="#e9a965" /><path d="M10 14l7 6 7-6" fill="none" stroke="#fff" />
            {:else if app === 'cam' || app === 'camrec'}
              <path d="M0 0h24v20l-4 4H0z" fill={app === 'cam' ? '#7fb83a' : '#fff'} /><path d="M0 20h24l-4 4H0z" fill="#3e6a10" /><path d="M18 5h-6c-6 0-6 10 0 10h6" fill="none" stroke={app === 'cam' ? '#fff' : '#111'} stroke-width="4" />
            {:else if app === 'drop'}
              <path d="M0 0h24v24H0z" fill="#3a3c40" /><circle cx="12" cy="13" r="5.5" fill="#c9d6cf" /><path d="M12 5c2 3 4 5 3.5 8s-6 3-7 0S11 8 12 5z" fill="#37a86c" />
            {:else}
              <path d="M1 1h22v22H1z" fill="#f2c811" /><path d="M4.5 18V8h15v8" fill="none" stroke="#111" stroke-width="1.5" /><path d="M7.5 19v-4M10.5 19v-6M13.5 19v-5M16.5 19v-8" stroke="#111" stroke-width="2" />
            {/if}
          </svg>
        </button>
      {/each}
    </div>
    <div class="updown">
      <svg width="9" height="6" viewBox="0 0 9 6"><path d="M1 5l3.5-3.5L8 5" /></svg>
      <svg width="9" height="6" viewBox="0 0 9 6"><path d="M1 1l3.5 3.5L8 1" /></svg>
    </div>
    <div class="tray">
      <button aria-label="Hidden icons"><svg width="12" height="7" viewBox="0 0 12 7" fill="none" stroke="#fff" stroke-width="1.4"><path d="M.5 6.5L6 1l5.5 5.5" /></svg></button>
      <button aria-label="Battery"><svg width="17" height="12" viewBox="0 0 17 12" fill="none" stroke="#fff"><path d="M5.5 3.5h9v7h-8M15.5 5v4" /><path d="M7 5h7v4H7z" fill="#fff" /><path d="M1.5 0v3M4.5 0v3M0 3.5h6v2L3 7.5 0 5.5zM3 7v4h3" /></svg></button>
    </div>
    <div class="tray dark">
      <button aria-label="Network"><svg width="13" height="13" viewBox="0 0 13 13" fill="none" stroke="#fff"><path d="M1 13A12 12 0 0 1 12.5 1" opacity=".6" /><path d="M4 13a9 9 0 0 1 8.5-9M7 13a6 6 0 0 1 5.5-6M9.5 13a3 3 0 0 1 3-3" /><circle cx="12" cy="12" r="1" fill="#fff" /></svg></button>
      <button aria-label="Volume"><svg width="16" height="14" viewBox="0 0 16 14" fill="none" stroke="#fff"><path d="M.5 4.5H3l4-3.5v12L3 9.5H.5zM9 4.5q1.5 2.5 0 5M11.5 3q2.5 4 0 8" /><path d="M13.5 1.5q3.5 5.5 0 11" opacity=".5" /></svg></button>
      <span class="lang">FRA</span>
      <span class="clock">9:31 PM<br />11/22/2016</span>
      <button class="note" aria-label="Notifications"><svg width="17" height="16" viewBox="0 0 17 16" fill="none" stroke="#fff" stroke-width="1.2"><path d="M.5 1h16v11h-5.5v3.5L7.5 12h-7z" /></svg></button>
      <span class="desk"></span>
    </div>
  </footer>
</div>

<style>
  :global(body) {
    margin: 0;
  }
  .window {
    display: flex;
    flex-direction: column;
    height: 100vh;
    overflow: hidden;
    background: #e6e6e6;
    color: #444;
    font-family: 'Open Sans', 'Noto Sans', sans-serif;
    font-size: 12px;
    line-height: 16px;
  }
  .window * {
    box-sizing: border-box;
  }
  button {
    display: flex;
    align-items: center;
    justify-content: center;
    margin: 0;
    padding: 0;
    border: 0;
    background: none;
    color: inherit;
    font: inherit;
    white-space: nowrap;
  }
  input,
  select {
    min-width: 0;
    padding: 0;
    border: 0;
    outline: 0;
    background: none;
    color: inherit;
    font: inherit;
  }
  svg {
    flex: none;
  }
  .caret {
    fill: #666;
  }
  hr {
    width: 1px;
    height: 22px;
    margin: 0 4px;
    border: 0;
    background: #d0d0d0;
  }

  /* title bar */
  .title {
    position: relative;
    flex: none;
    height: 64px;
    background: #217346;
    color: #fff;
  }
  .doodle {
    position: absolute;
    top: 0;
    right: 0;
  }
  .caption {
    position: relative;
    display: flex;
    justify-content: space-between;
    height: 34px;
    padding: 0 18px 0 22px;
  }
  .quick,
  .winctl {
    display: flex;
    flex: 1;
    align-items: center;
    height: 30px;
  }
  .quick {
    gap: 8px;
  }
  .quick button {
    gap: 6px;
  }
  .quick .save {
    margin-right: 7px;
  }
  .quick .custom {
    margin-left: 8px;
  }
  .white {
    display: flex;
  }
  .white .caret {
    fill: #fff;
  }
  .off {
    opacity: 0.3;
  }
  .doc {
    line-height: 30px;
  }
  .winctl {
    justify-content: flex-end;
    gap: 36px;
  }
  .user {
    margin-right: -14px;
  }
  .tabs {
    position: relative;
    display: flex;
    height: 30px;
  }
  .tabs button {
    padding: 0 13px;
  }
  .tabs .file {
    width: 61px;
    padding-right: 15px;
  }
  .tabs .current {
    width: 60px;
    margin-right: 2px;
    background: #f1f1f1;
    color: #217346;
  }
  .tabs .tell {
    gap: 6px;
    color: #d7e8de;
  }
  .tail {
    display: flex;
    margin-left: auto;
  }
  .tabs .share {
    gap: 6px;
  }
  .tabs .smile {
    padding: 0 15px 0 8px;
  }

  /* ribbon */
  .ribbon {
    display: flex;
    flex: none;
    height: 93px;
    padding-top: 3px;
    border-bottom: 1px solid #d2d2d2;
    background: #f1f1f1;
  }
  .group {
    position: relative;
    display: flex;
    flex-direction: column;
    padding: 0 4px;
  }
  .group::after {
    content: '';
    position: absolute;
    top: 1px;
    right: 0;
    width: 1px;
    height: 84px;
    background: #d0d0d0;
  }
  .clipboard { width: 86px; }
  .font { width: 207px; }
  .align { width: 264px; }
  .number { width: 140px; }
  .styles { width: 181px; }
  .cells { width: 136px; }
  .editing { width: 187px; }
  .play { width: 75px; }
  .body {
    display: flex;
    height: 70px;
  }
  .rows {
    display: flex;
    flex-direction: column;
    gap: 8px;
    padding-top: 8px;
  }
  .line {
    display: flex;
    align-items: center;
    height: 23px;
  }
  .group footer {
    display: flex;
    align-items: center;
    justify-content: center;
    height: 19px;
    padding-top: 3px;
    color: #666;
  }
  .launcher {
    position: absolute;
    right: 5px;
    bottom: 4px;
  }
  .clipboard footer {
    justify-content: flex-start;
    padding-left: 5px;
  }
  .ib {
    width: 22px;
    height: 23px;
    font-size: 14px;
    color: #555;
  }
  .ib i {
    font-family: 'Liberation Serif', serif;
    font-size: 16px;
    font-weight: bold;
  }
  .ib u {
    font-weight: 600;
  }
  .on {
    background: #c5c5c5;
  }
  .ca {
    width: 12px;
    height: 23px;
  }
  .pick {
    position: relative;
    display: flex;
    height: 23px;
    border: 1px solid #c0c0c0;
    background: #fff;
  }
  .pick select {
    width: 100%;
    padding-left: 3px;
    appearance: none;
  }
  .pick::after {
    content: '';
    position: absolute;
    top: 10px;
    right: 4px;
    border: 3px solid transparent;
    border-top-color: #666;
    border-bottom: 0;
    pointer-events: none;
  }
  .name { width: 111px; }
  .size { width: 43px; }
  .format { width: 131px; }
  .grow {
    align-items: flex-start;
    margin-left: 2px;
    font-size: 15px;
    line-height: 23px;
  }
  .grow b {
    font-weight: 600;
  }
  .grow svg {
    margin-top: 4px;
  }
  .small {
    margin-left: 0;
    font-size: 12px;
  }
  .color b {
    width: 16px;
    height: 17px;
    border-bottom: 4px solid #f00;
    font-weight: 600;
    line-height: 14px;
  }
  .sym {
    font-size: 15px;
  }
  .comma {
    align-items: flex-start;
    font-family: 'Liberation Serif', serif;
    font-size: 24px;
    line-height: 8px;
  }
  .dec {
    flex-direction: column;
    align-items: flex-end;
    padding-right: 3px;
    font-size: 9px;
    line-height: 9px;
  }
  .dec em {
    color: #2f6eb0;
    font-style: normal;
    font-weight: bold;
  }
  .tall {
    height: 55px;
    margin: 7px 4px 0;
  }
  .text {
    justify-content: flex-start;
    gap: 4px;
    height: 23px;
    padding-left: 3px;
  }
  .big {
    flex-direction: column;
    justify-content: flex-start;
    width: 44px;
    height: 69px;
    padding-top: 3px;
  }
  .big > svg:first-child {
    margin-bottom: 3px;
  }
  .big span {
    display: flex;
    align-items: center;
    gap: 3px;
  }
  .big > .caret {
    margin-top: 6px;
  }
  .wide { width: 72px; }
  .mid { width: 56px; }
  .cells .big { width: 42px; }
  .play .big { width: 64px; }
  .paste {
    width: 42px;
    color: #a3a3a3;
  }
  .paste .caret {
    fill: #bbb;
  }
  .stack {
    display: flex;
    flex-direction: column;
  }
  .clips button {
    justify-content: flex-start;
    gap: 6px;
    height: 23px;
    padding-left: 3px;
  }
  .edits {
    width: 90px;
  }
  .edits .text {
    padding-left: 2px;
  }
  .push {
    display: flex;
    margin-left: 4px;
  }
  .finder {
    position: relative;
  }
  .pressed {
    background: #c5c5c5;
  }
  .collapse {
    margin: auto 10px 4px auto;
  }
  .menu {
    position: absolute;
    z-index: 2;
    top: 69px;
    left: 0;
    width: 182px;
    margin: 0;
    padding: 1px;
    border: 1px solid #c6c6c6;
    background: #fff;
    box-shadow: 1px 1px 2px #0002;
    color: #555;
    list-style: none;
  }
  .menu button {
    justify-content: flex-start;
    width: 100%;
    height: 24px;
  }
  .menu .active {
    background: #c5c5c5;
    color: #333;
  }
  .ruled::after {
    content: '';
    display: block;
    height: 1px;
    margin: 0 0 1px 31px;
    background: #e1e1e1;
  }
  .mi {
    display: flex;
    width: 31px;
    padding-left: 4px;
  }
  .menu u {
    text-underline-offset: 2px;
  }
  .abac {
    display: flex;
    flex-direction: column;
    font-size: 10px;
    line-height: 8px;
  }
  .abac b {
    font-weight: 600;
  }
  .abac em {
    color: #8e5bb0;
    font-style: normal;
  }
  .abac i {
    color: #4a80b5;
    font-style: normal;
  }
  .pointer {
    position: absolute;
    z-index: 3;
    top: 139px;
    left: -98px;
    filter: drop-shadow(1px 3px 2px #0006);
  }

  /* formula bar */
  .formula {
    display: flex;
    flex: none;
    align-items: center;
    height: 46px;
    padding: 0 5px;
    font-size: 13px;
  }
  .box {
    display: flex;
    align-items: center;
    height: 26px;
    border: 1px solid #c6c6c6;
    background: #fff;
  }
  .namebox {
    width: 162px;
    padding: 0 6px;
  }
  .box input {
    flex: 1;
  }
  .grip {
    width: 2px;
    height: 11px;
    border-top: 2px solid #aaa;
    border-bottom: 2px solid #aaa;
    background: linear-gradient(transparent 3px, #aaa 3px, #aaa 5px, transparent 5px);
  }
  .formula .grip {
    margin: 0 14px;
  }
  .fx {
    width: 110px;
    justify-content: space-around;
  }
  .fn {
    color: #666;
    font-family: 'Liberation Serif', serif;
    font-size: 17px;
  }
  .fn small {
    font-size: 12px;
    font-style: italic;
    margin-top: 4px;
  }
  .content {
    flex: 1;
    margin-left: 3px;
    padding: 0 4px 0 11px;
  }

  /* cells */
  .sheet {
    display: flex;
    flex: 1;
    min-height: 0;
    border-bottom: 1px solid #ababab;
  }
  .grid {
    position: relative;
    flex: 1;
    overflow: hidden;
    border-right: 1px solid #999;
    color: #000;
    font-size: 13px;
  }
  table {
    width: 100%;
    border-spacing: 0;
    table-layout: fixed;
    background: #fff;
  }
  td,
  th {
    height: 20px;
    padding: 2px 2px 0;
    border: solid #d4d4d4;
    border-width: 0 1px 1px 0;
    line-height: 17px;
    text-align: left;
    white-space: nowrap;
  }
  th {
    padding: 2px 0 0;
    border-color: #b4b4b4;
    background: #e6e6e6;
    font-weight: 400;
    text-align: center;
  }
  thead th {
    padding-top: 0;
    border-bottom-color: #999;
  }
  tbody th,
  .sel {
    background: #d2d2d2;
    color: #217346;
  }
  .corner svg {
    display: block;
    margin: 7px 0 0 auto;
  }
  .in {
    border-color: #000;
    background: #c6c6c6;
  }
  .num {
    text-align: right;
  }
  .err {
    background: linear-gradient(135deg, #006400 3px, #c6c6c6 4px);
    text-align: center;
  }
  .names .in {
    background: #acb9c5;
    font-weight: 600;
  }
  .names .in:nth-child(2) {
    background: #ddebf7;
  }
  .selection {
    position: absolute;
    top: 18px;
    bottom: -4px;
    left: 25px;
    border: 2px solid #217346;
    box-shadow: inset 0 0 0 1px #fff;
  }
  .vscroll {
    display: flex;
    flex-direction: column;
    width: 15px;
    margin: 3px 3px 0 4px;
    background: #dadada;
  }
  .vscroll button,
  .hscroll button {
    flex: none;
    width: 15px;
    height: 14px;
    border: 1px solid #ababab;
    background: #fff;
    fill: #666;
  }
  .vscroll .thumb {
    height: 17px;
    border: 1px solid #ababab;
    background: #fff;
  }
  .vscroll .end {
    margin-top: auto;
  }

  /* sheet tabs */
  .sheets {
    display: flex;
    flex: none;
    align-items: center;
    height: 28px;
    padding: 0 21px 0 15px;
    border-bottom: 1px solid #c0c0c0;
    font-size: 13px;
  }
  .nav {
    width: 29px;
    fill: #217346;
  }
  .dots {
    width: 27px;
    color: #217346;
    font-weight: 700;
  }
  .tab {
    height: 20px;
    border-right: 1px solid #ababab;
  }
  .t1 {
    width: 137px;
    border-left: 1px solid #ababab;
  }
  .t2 { width: 121px; }
  .t3 {
    align-self: flex-start;
    width: 168px;
    height: 25px;
    padding-top: 2px;
    border-bottom: 2px solid #217346;
    background: #fff;
    color: #217346;
    font-weight: 600;
  }
  .t4 { width: 129px; }
  .t5 {
    width: 95px;
    padding-left: 13px;
    border-right: 0;
  }
  .t5 span {
    overflow: hidden;
  }
  .add {
    margin: 0 20px 0 6px;
  }
  .hscroll {
    display: flex;
    flex: 1;
    align-items: center;
    margin-left: 16px;
    background: #dadada;
  }
  .hscroll .thumb {
    flex: 1;
    height: 15px;
    border: 1px solid #ababab;
    background: #fff;
  }
  .hscroll button {
    height: 15px;
  }
  .track {
    width: 32px;
  }

  .status {
    display: flex;
    flex: none;
    align-items: center;
    height: 22px;
    padding: 0 8px 0 7px;
    background: #f1f1f1;
  }
  .macro {
    margin-left: 17px;
  }
  .count {
    margin: 0 18px 0 auto;
  }
  .view {
    width: 38px;
    height: 21px;
  }
  .step {
    width: 14px;
  }
  .zoom {
    width: 100px;
    height: 14px;
    margin: 0 1px;
    appearance: none;
    background: linear-gradient(#999, #999) center / 100% 1px no-repeat;
  }
  .zoom::-webkit-slider-thumb {
    width: 4px;
    height: 11px;
    appearance: none;
    background: #555;
  }
  .pct {
    width: 40px;
    text-align: right;
  }

  /* taskbar */
  .taskbar {
    position: relative;
    display: flex;
    flex: none;
    height: 40px;
    background: #246463;
    color: #fff;
  }
  .ghost {
    position: absolute;
    top: 2px;
    color: #0a4443;
    line-height: 15px;
    white-space: nowrap;
  }
  .start {
    width: 48px;
    background: #004342;
  }
  .search {
    display: flex;
    align-items: center;
    width: 344px;
    padding: 0 15px 0 9px;
    background: #357270;
  }
  .search input {
    flex: 1;
    margin-left: 5px;
    font-size: 14px;
  }
  .search input::placeholder {
    color: #93b5b4;
    opacity: 1;
  }
  .taskview {
    position: relative;
    width: 51px;
  }
  .apps {
    position: relative;
    display: flex;
    flex: 1;
  }
  .app {
    flex: 1;
    min-width: 0;
    border-bottom: 2px solid transparent;
  }
  .running {
    border-color: #8ff0ec;
  }
  .app.edge {
    background: #ffffff1f;
  }
  .app.excel {
    background: #2a9c98;
  }
  .updown {
    position: relative;
    display: flex;
    flex-direction: column;
    align-items: center;
    justify-content: space-between;
    width: 17px;
    padding: 7px 0 4px;
    background: #f1f1f1;
    fill: none;
    stroke: #555;
    stroke-width: 2;
  }
  .tray {
    position: relative;
    display: flex;
    align-items: center;
    background: #1d5f5e;
  }
  .tray button {
    width: 23px;
    height: 40px;
  }
  .dark {
    width: 203px;
    padding-left: 3px;
    background: #004140;
  }
  .lang {
    width: 36px;
    text-align: center;
  }
  .clock {
    width: 66px;
    line-height: 18px;
    text-align: center;
  }
  .tray .note {
    width: 38px;
  }
  .desk {
    width: 1px;
    height: 40px;
    margin-left: auto;
    margin-right: 4px;
    background: #5d8584;
  }
</style>
